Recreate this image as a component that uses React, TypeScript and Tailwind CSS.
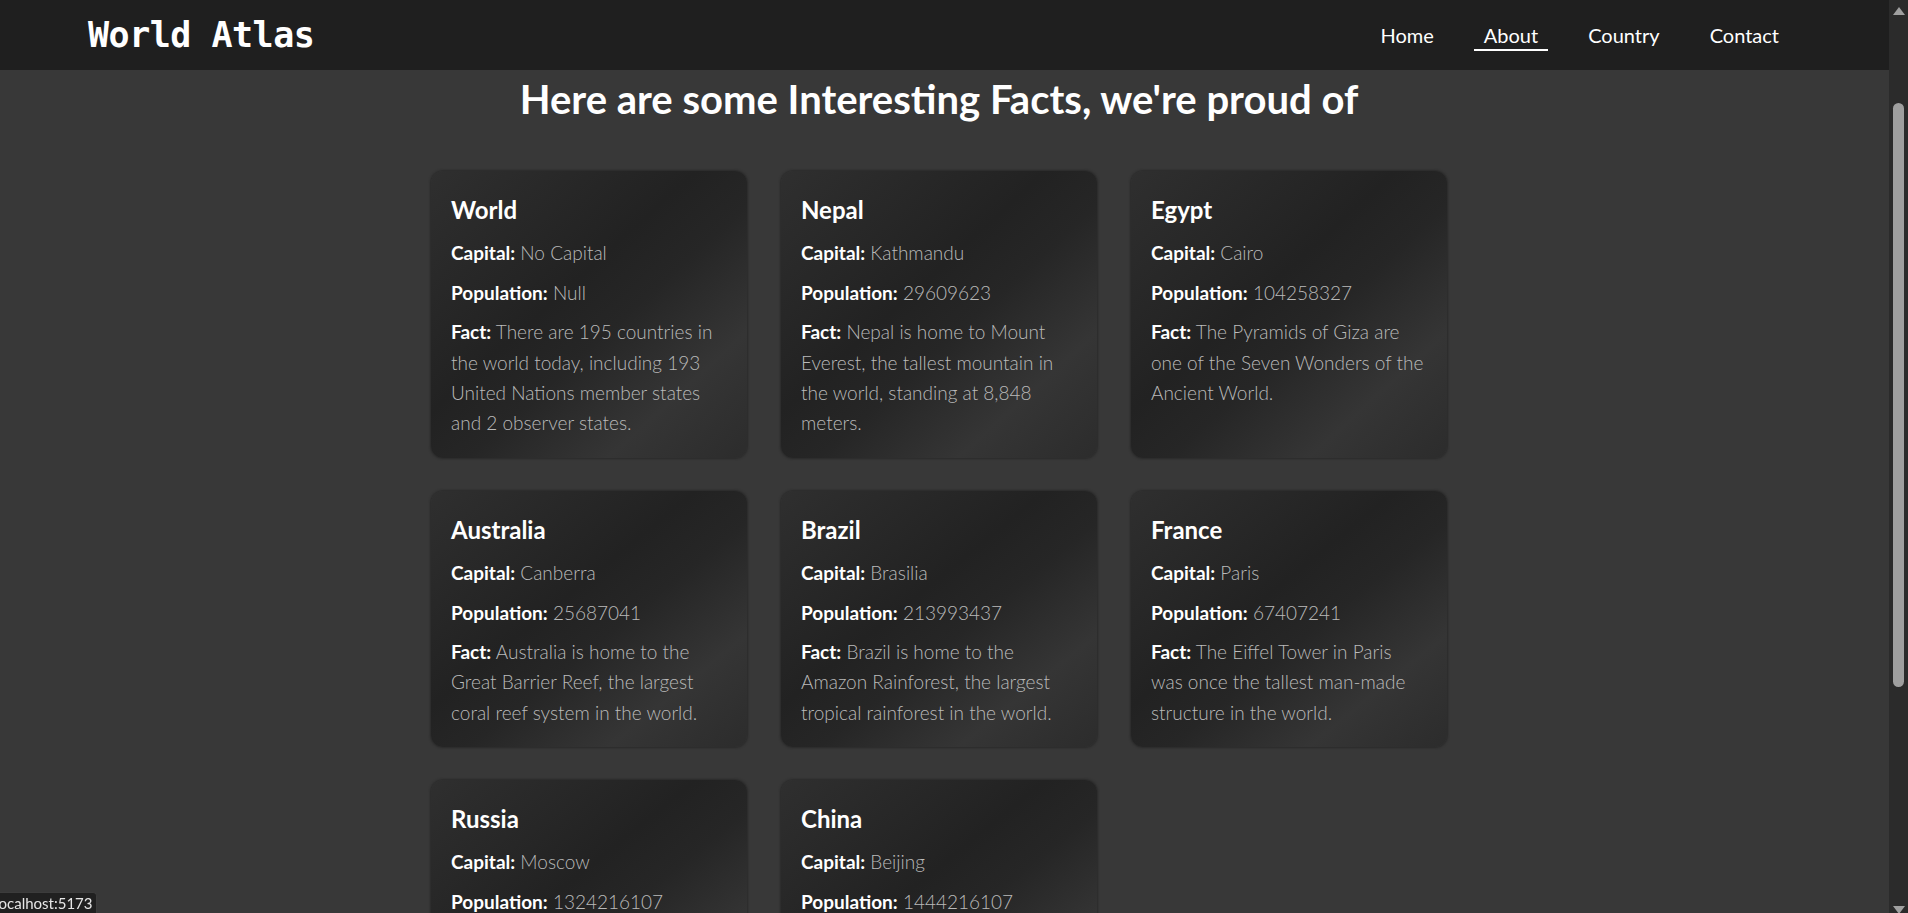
import React from "react";

type Fact = {
  name: string;
  capital: string;
  population: string;
  fact: string;
};

const facts: Fact[] = [
  {
    name: "World",
    capital: "No Capital",
    population: "Null",
    fact: "There are 195 countries in the world today, including 193 United Nations member states and 2 observer states.",
  },
  {
    name: "Nepal",
    capital: "Kathmandu",
    population: "29609623",
    fact: "Nepal is home to Mount Everest, the tallest mountain in the world, standing at 8,848 meters.",
  },
  {
    name: "Egypt",
    capital: "Cairo",
    population: "104258327",
    fact: "The Pyramids of Giza are one of the Seven Wonders of the Ancient World.",
  },
  {
    name: "Australia",
    capital: "Canberra",
    population: "25687041",
    fact: "Australia is home to the Great Barrier Reef, the largest coral reef system in the world.",
  },
  {
    name: "Brazil",
    capital: "Brasilia",
    population: "213993437",
    fact: "Brazil is home to the Amazon Rainforest, the largest tropical rainforest in the world.",
  },
  {
    name: "France",
    capital: "Paris",
    population: "67407241",
    fact: "The Eiffel Tower in Paris was once the tallest man-made structure in the world.",
  },
  {
    name: "Russia",
    capital: "Moscow",
    population: "1324216107",
    fact: "Russia is the largest country in the world by land area, spanning 11 time zones.",
  },
  {
    name: "China",
    capital: "Beijing",
    population: "1444216107",
    fact: "The Great Wall of China is one of the longest structures ever built by humans.",
  },
];

const links = ["Home", "About", "Country", "Contact"];

function Header() {
  return (
    <header className="flex h-[70px] shrink-0 items-center justify-between bg-[#1f1f1f] pl-[88px] pr-[100px]">
      <h1 className="font-['DejaVu_Sans_Mono',monospace] text-[35px] font-bold tracking-[-0.5px] text-white">
        World Atlas
      </h1>
      <nav>
        <ul className="flex items-center gap-[30px] text-[20px] text-white">
          {links.map((link) => (
            <li key={link}>
              <a
                href="#"
                className={
                  link === "About"
                    ? "block border-b-2 border-white px-[10px] pt-[2px] leading-[28px]"
                    : "block border-b-2 border-transparent px-[10px] pt-[2px] leading-[28px]"
                }
              >
                {link}
              </a>
            </li>
          ))}
        </ul>
      </nav>
    </header>
  );
}

function FactCard({ item }: { item: Fact }) {
  return (
    <div className="flex flex-col gap-[9px] rounded-[12px] bg-[linear-gradient(to_bottom_right,#2f2f2f,#222222_42%,#262626_56%,#353535_78%,#2c2c2c)] px-5 pb-[19px] pt-5 shadow-[0_0_3px_#1a1a1a]">
      <h3 className="text-[24px] font-bold leading-[1.6] text-white">{item.name}</h3>
      <p className="text-[19px] font-light leading-[1.6] text-[#bababa]">
        <span className="font-bold text-white">Capital:</span> {item.capital}
      </p>
      <p className="text-[19px] font-light leading-[1.6] text-[#bababa]">
        <span className="font-bold text-white">Population:</span> {item.population}
      </p>
      <p className="text-[19px] font-light leading-[1.6] text-[#bababa]">
        <span className="font-bold text-white">Fact:</span> {item.fact}
      </p>
    </div>
  );
}

function Scrollbar() {
  return (
    <div className="flex h-screen w-[19px] shrink-0 flex-col items-center bg-[#2b2b2b]">
      <svg width="12" height="8" viewBox="0 0 12 8" className="mt-[7px]">
        <polygon points="6,0 12,8 0,8" fill="#a0a0a0" />
      </svg>
      <div className="mt-[88px] h-[584px] w-[11px] rounded-full bg-[#9f9f9f]" />
      <svg width="12" height="8" viewBox="0 0 12 8" className="mb-[-1px] mt-auto">
        <polygon points="0,0 12,0 6,8" fill="#a0a0a0" />
      </svg>
    </div>
  );
}

export default function App() {
  return (
    <div className="flex h-screen overflow-hidden bg-[#383838] font-['Lato',sans-serif]">
      <div className="flex min-w-0 flex-1 flex-col">
        <Header />
        <main className="pr-[11px] pt-[5px]">
          <h2 className="mb-[48px] text-center text-[40px] font-bold leading-[1.2] text-white">
            Here are some Interesting Facts, we're proud of
          </h2>
          <div className="mx-auto grid w-[1016px] grid-cols-3 gap-x-[34px] gap-y-[33px]">
            {facts.map((item) => (
              <FactCard key={item.name} item={item} />
            ))}
          </div>
        </main>
      </div>
      <Scrollbar />
      <div className="fixed bottom-0 left-0 z-20 h-[21px] w-[97px] overflow-hidden rounded-tr-[4px] border-r border-t border-[#3c3c3c] bg-[#202020]">
        <span className="-ml-[5px] block whitespace-nowrap text-[15px] leading-[20px] text-[#e6e6e6]">
          localhost:5173
        </span>
      </div>
    </div>
  );
}
